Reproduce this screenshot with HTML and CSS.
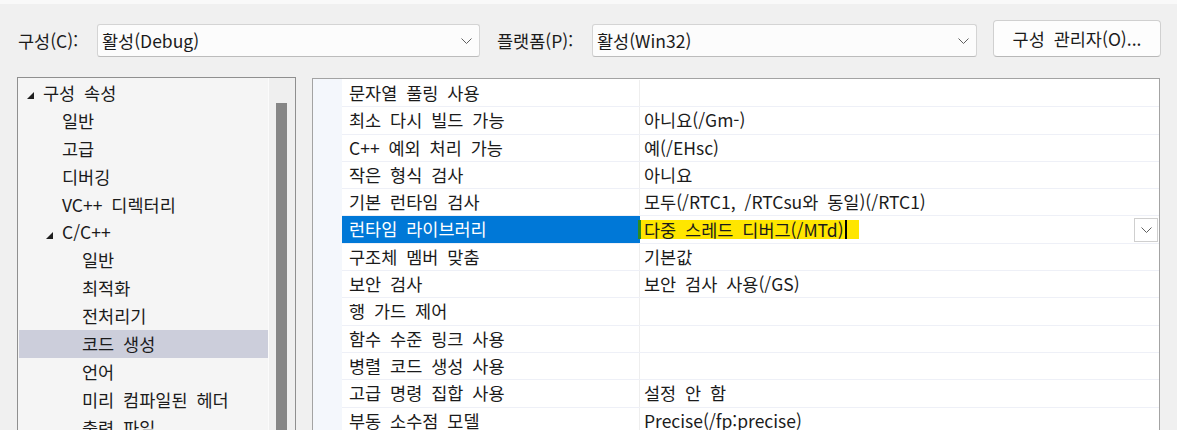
FILE: index.html
```html
<!DOCTYPE html>
<html lang="ko">
<head>
<meta charset="utf-8">
<title>속성 페이지</title>
<link rel="stylesheet" href="styles.css">
</head>
<body>
<div class="strip"></div>
<div class="toolbar">
  <label class="lbl lbl-config">구성(C):</label>
  <div class="combo combo-config">
    <span class="combo-text">활성(Debug)</span>
    <svg class="chev" width="11" height="6" viewBox="0 0 11 6"><path d="M0.5 0.5 L5.5 5.5 L10.5 0.5" /></svg>
  </div>
  <label class="lbl lbl-platform">플랫폼(P):</label>
  <div class="combo combo-platform">
    <span class="combo-text">활성(Win32)</span>
    <svg class="chev" width="11" height="6" viewBox="0 0 11 6"><path d="M0.5 0.5 L5.5 5.5 L10.5 0.5" /></svg>
  </div>
  <button class="btn">구성 관리자(O)...</button>
</div>
<div class="main">
  <div class="tree">
    <ul class="tree-list">
      <li class="node lv0"><svg class="twisty" width="7" height="7" viewBox="0 0 7 7"><path d="M7 0 L7 7 L0 7 Z"/></svg>구성 속성</li>
      <li class="node lv1">일반</li>
      <li class="node lv1">고급</li>
      <li class="node lv1">디버깅</li>
      <li class="node lv1">VC++ 디렉터리</li>
      <li class="node lv1"><svg class="twisty" width="7" height="7" viewBox="0 0 7 7"><path d="M7 0 L7 7 L0 7 Z"/></svg>C/C++</li>
      <li class="node lv2">일반</li>
      <li class="node lv2">최적화</li>
      <li class="node lv2">전처리기</li>
      <li class="node lv2 selected">코드 생성</li>
      <li class="node lv2">언어</li>
      <li class="node lv2">미리 컴파일된 헤더</li>
      <li class="node lv2">출력 파일</li>
    </ul>
    <div class="vscroll"><div class="thumb"></div></div>
  </div>
  <div class="grid">
    <div class="gutter"></div>
    <div class="rows">
      <div class="prow"><div class="pname">문자열 풀링 사용</div><div class="pval"></div></div>
      <div class="prow"><div class="pname">최소 다시 빌드 가능</div><div class="pval">아니요(/Gm-)</div></div>
      <div class="prow"><div class="pname">C++ 예외 처리 가능</div><div class="pval">예(/EHsc)</div></div>
      <div class="prow"><div class="pname">작은 형식 검사</div><div class="pval">아니요</div></div>
      <div class="prow"><div class="pname">기본 런타임 검사</div><div class="pval">모두(/RTC1, /RTCsu와 동일)(/RTC1)</div></div>
      <div class="prow active"><div class="pname">런타임 라이브러리</div><div class="pval"><span class="mark">다중 스레드 디버그(/MTd)<span class="caret"></span></span><span class="dd"><svg class="chev" width="11" height="6" viewBox="0 0 11 6"><path d="M0.5 0.5 L5.5 5.5 L10.5 0.5" /></svg></span></div></div>
      <div class="prow"><div class="pname">구조체 멤버 맞춤</div><div class="pval">기본값</div></div>
      <div class="prow"><div class="pname">보안 검사</div><div class="pval">보안 검사 사용(/GS)</div></div>
      <div class="prow"><div class="pname">행 가드 제어</div><div class="pval"></div></div>
      <div class="prow"><div class="pname">함수 수준 링크 사용</div><div class="pval"></div></div>
      <div class="prow"><div class="pname">병렬 코드 생성 사용</div><div class="pval"></div></div>
      <div class="prow"><div class="pname">고급 명령 집합 사용</div><div class="pval">설정 안 함</div></div>
      <div class="prow"><div class="pname">부동 소수점 모델</div><div class="pval">Precise(/fp:precise)</div></div>
      <div class="prow"><div class="pname">부동 소수점 예외 사용</div><div class="pval"></div></div>
    </div>
  </div>
</div>
</body>
</html>
```
FILE: styles.css
```css
html, body {
  margin: 0;
  padding: 0;
}
body {
  background: #f0f0f0;
  font-family: "Noto Sans CJK KR", sans-serif;
  font-size: 17.5px;
  color: #1b1b1b;
  height: 430px;
  overflow: hidden;
  word-spacing: 4px;
}
.strip {
  height: 4px;
  background: #f9f9f9;
}
.toolbar {
  display: flex;
  align-items: flex-end;
  padding: 16px 0 0 18px;
  height: 37px;
}
.lbl {
  height: 33px;
  line-height: 33px;
  white-space: nowrap;
}
.lbl-config { width: 79px; }
.lbl-platform { width: 95px; margin-left: 17px; }
.combo {
  box-sizing: border-box;
  height: 33px;
  background: #fcfcfc;
  border: 1px solid #d4d4d4;
  border-bottom-color: #bcbcbc;
  border-radius: 3px;
  display: flex;
  align-items: center;
  padding: 0 7px 0 4px;
}
.combo-config { width: 383px; }
.combo-platform { width: 385px; }
.combo-text { flex: 1; }
.chev path {
  fill: none;
  stroke: #5f5f5f;
  stroke-width: 1;
}
.btn {
  box-sizing: border-box;
  margin-left: 16px;
  width: 168px;
  height: 37px;
  background: #fdfdfd;
  border: 1px solid #d0d0d0;
  border-bottom-color: #b8b8b8;
  border-radius: 4px;
  font: inherit;
  color: inherit;
  word-spacing: 4px;
  padding: 0;
}
.main {
  display: flex;
  align-items: flex-start;
  gap: 16px;
  padding: 20px 17px 0 17px;
}
.tree {
  box-sizing: border-box;
  width: 279px;
  height: 380px;
  border: 1px solid #8f8f8f;
  background: #f5f5f5;
  display: flex;
}
.tree-list {
  list-style: none;
  margin: 0;
  padding: 1px 0 0 1px;
  flex: 1;
}
.node {
  height: 27.9px;
  line-height: 27.9px;
  white-space: nowrap;
  display: flex;
  align-items: center;
}
.node.lv0 { padding-left: 24px; }
.node.lv1 { padding-left: 43px; }
.node.lv2 { padding-left: 63px; }
.node.selected { background: #cccedb; }
.twisty {
  margin-left: -16px;
  margin-right: 9px;
  margin-top: 6px;
  flex: none;
}
.twisty path { fill: #1e1e1e; }
.vscroll {
  width: 27px;
  flex: none;
  border-left: 1px solid #fbfbfb;
  background: #efefef;
  padding: 25px 8px 0 7px;
  box-sizing: border-box;
}
.thumb {
  width: 11px;
  height: 400px;
  background: #868686;
}
.grid {
  box-sizing: border-box;
  flex: 1;
  margin-top: 1px;
  height: 380px;
  border: 1px solid #a3a3a3;
  background: #ffffff;
  display: flex;
}
.gutter {
  width: 29px;
  background: #f4f7fc;
  flex: none;
}
.rows {
  flex: 1;
  padding-top: 1px;
}
.prow {
  display: flex;
  height: 27.3px;
  box-sizing: border-box;
  border-bottom: 1px solid #eef0f7;
  white-space: nowrap;
}
.pname {
  width: 298px;
  box-sizing: border-box;
  padding-left: 7px;
  border-right: 1px solid #eeeeee;
  line-height: 26.3px;
  flex: none;
}
.pval {
  flex: 1;
  padding-left: 4px;
  line-height: 26.3px;
  display: flex;
  align-items: center;
}
.prow.active .pname {
  background: #0078d7;
  color: #ffffff;
  border-right-color: #0078d7;
}
.mark {
  background: #ffe600;
  border-left: 3px solid #2e8a1e;
  margin-left: -6px;
  padding-left: 3px;
  padding-right: 12px;
  height: 19px;
  line-height: 19px;
  display: flex;
  align-items: center;
}
.caret {
  display: inline-block;
  width: 2px;
  height: 19px;
  background: #000000;
  margin-left: 1px;
}
.dd {
  margin-left: auto;
  margin-right: 1px;
  width: 24px;
  height: 24px;
  box-sizing: border-box;
  border: 1px solid #cfcfcf;
  background: #ffffff;
  display: flex;
  align-items: center;
  justify-content: center;
}
```
